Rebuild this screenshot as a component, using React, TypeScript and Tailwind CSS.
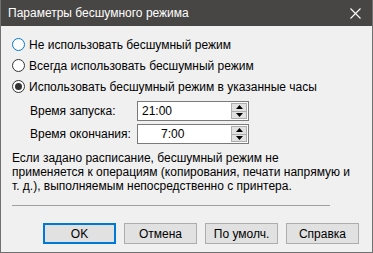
import React from 'react'

const font = { fontFamily: '"Liberation Sans", Arial, sans-serif' }

function Radio({ checked, focus, label }: { checked?: boolean; focus?: boolean; label: string }) {
  return (
    <div className="flex items-center h-[21px]">
      <span
        className={
          'w-[13px] h-[13px] rounded-full border bg-white flex items-center justify-center ' +
          (focus ? 'border-[#0078d7]' : 'border-[#333333]')
        }
      >
        {checked && <span className="w-[7px] h-[7px] rounded-full bg-[#333333]" />}
      </span>
      <span className="ml-[4px] text-[12px] text-black whitespace-nowrap">{label}</span>
    </div>
  )
}

function Spin({ value, pad }: { value: string; pad?: boolean }) {
  return (
    <div className="w-[112px] h-[20px] border border-[#7a7a7a] bg-white flex items-stretch">
      <span className={'flex-1 text-[12px] leading-[18px] text-black ' + (pad ? 'pl-[23px]' : 'pl-[4px]')}>{value}</span>
      <div className="w-[16px] my-[1px] mr-[1px] flex flex-col border border-[#adadad] bg-[#e1e1e1]">
        <div className="flex-1 flex items-center justify-center border-b border-[#adadad]">
          <svg width="7" height="4" viewBox="0 0 7 4"><path d="M3.5 0L7 4H0z" fill="#000" /></svg>
        </div>
        <div className="flex-1 flex items-center justify-center">
          <svg width="7" height="4" viewBox="0 0 7 4"><path d="M0 0H7L3.5 4z" fill="#000" /></svg>
        </div>
      </div>
    </div>
  )
}

function Btn({ label, primary }: { label: string; primary?: boolean }) {
  return (
    <button
      className={
        'w-[73px] h-[21px] bg-[#e1e1e1] text-[12px] text-black flex items-center justify-center ' +
        (primary ? 'border-2 border-[#0078d7]' : 'border border-[#adadad]')
      }
    >
      {label}
    </button>
  )
}

export default function App() {
  return (
    <div className="w-[373px] h-[253px] bg-[#f0f0f0] border-x border-b border-[#707070] flex flex-col overflow-hidden" style={font}>
      <div className="h-[26px] shrink-0 bg-[#484644] flex items-center justify-between pl-[7px] pr-[11px]">
        <span className="text-white text-[12px]">Параметры бесшумного режима</span>
        <svg width="11" height="11" viewBox="0 0 11 11"><path d="M0.5 0.5L10.5 10.5M10.5 0.5L0.5 10.5" stroke="#fff" strokeWidth="1.1" /></svg>
      </div>
      <div className="flex flex-col pl-[11px] pr-[12px] pt-[8px]">
        <Radio focus label="Не использовать бесшумный режим" />
        <Radio label="Всегда использовать бесшумный режим" />
        <Radio checked label="Использовать бесшумный режим в указанные часы" />
        <div className="flex items-center mt-[4px] pl-[18px]">
          <span className="w-[107px] text-[12px] text-black whitespace-nowrap">Время запуска:</span>
          <Spin value="21:00" />
        </div>
        <div className="flex items-center mt-[3px] pl-[18px]">
          <span className="w-[107px] text-[12px] text-black whitespace-nowrap">Время окончания:</span>
          <Spin value="7:00" pad />
        </div>
        <p className="mt-[7px] text-[12px] leading-[14px] text-black whitespace-nowrap">
          Если задано расписание, бесшумный режим не
          <br />
          применяется к операциям (копирования, печати напрямую и
          <br />
          т. д.), выполняемым непосредственно с принтера.
        </p>
        <div className="mt-[12px] w-[318px] h-px bg-[#a0a0a0]" />
        <div className="flex justify-end gap-[8px] mt-[17px] pr-[1px] w-[348px]">
          <Btn primary label="OK" />
          <Btn label="Отмена" />
          <Btn label="По умолч." />
          <Btn label="Справка" />
        </div>
      </div>
    </div>
  )
}
